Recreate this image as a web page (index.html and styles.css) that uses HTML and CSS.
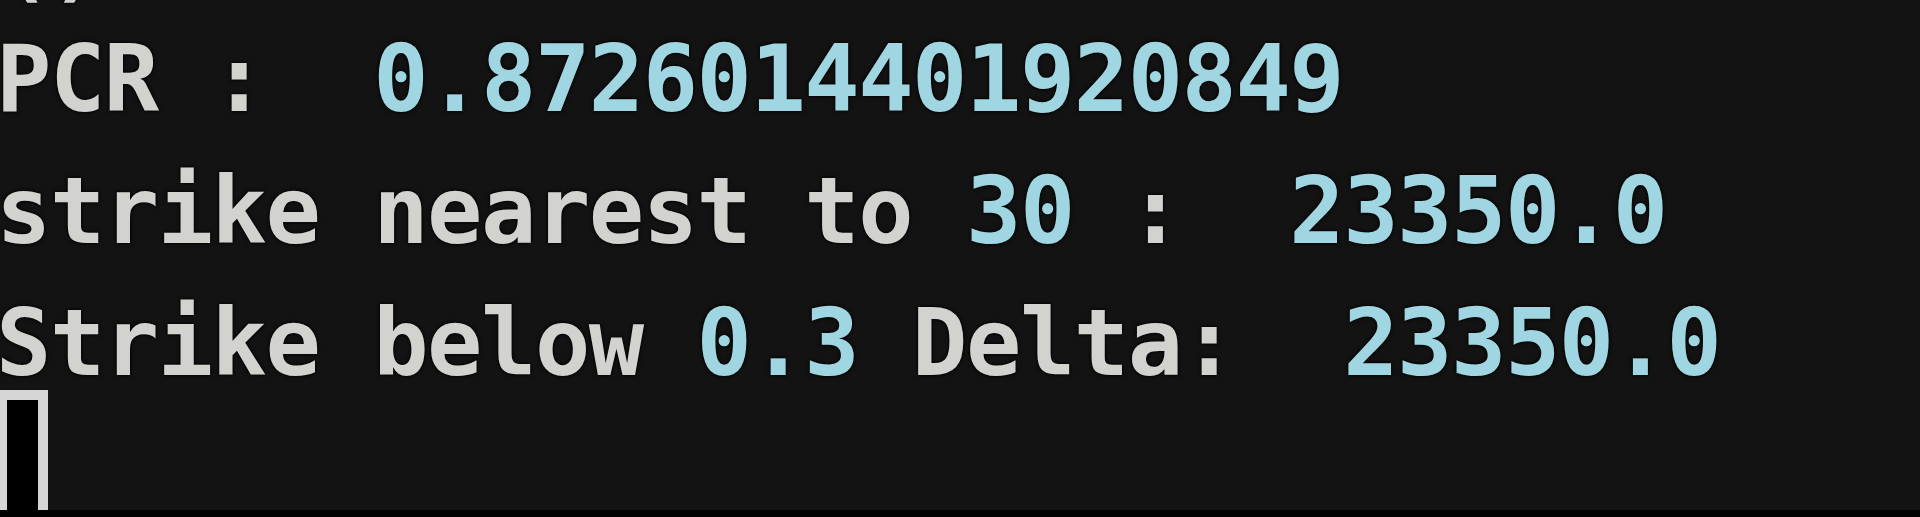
FILE: index.html
```html
<!DOCTYPE html>
<html>
<head>
<meta charset="utf-8">
<link rel="stylesheet" href="styles.css">
</head>
<body>
<div class="screen">
  <div class="term">
    <div class="line first">()</div>
    <div class="line">PCR :  <span class="num">0.8726014401920849</span></div>
    <div class="line">strike nearest to <span class="num">30</span> :  <span class="num">23350.0</span></div>
    <div class="line">Strike below <span class="num">0.3</span> Delta:  <span class="num">23350.0</span></div>
    <div class="cursor"></div>
  </div>
  <div class="edge"></div>
</div>
</body>
</html>
```
FILE: styles.css
```css
html, body {
  margin: 0;
  padding: 0;
  background: #131313;
}
.screen {
  width: 1920px;
  height: 517px;
  display: flex;
  flex-direction: column;
  overflow: hidden;
}
.term {
  flex: 1;
  overflow: hidden;
  margin-left: -4px;
  font-family: "DejaVu Sans Mono", "Liberation Mono", monospace;
  font-weight: bold;
  font-size: 92px;
  letter-spacing: -1.5px;
  color: #d2d2cf;
  text-shadow: 0 0 4px #000, 0 0 2px #000;
}
.line {
  height: 132px;
  line-height: 132px;
  white-space: pre;
}
.line.first {
  margin-top: -106px;
  height: 120px;
  line-height: 132px;
  overflow: hidden;
}
.num {
  color: #9fd6e2;
}
.cursor {
  margin-top: -20px;
  margin-left: 1px;
  width: 51px;
  height: 140px;
  box-sizing: border-box;
  border: 10px solid #d6d6d6;
  background: #000;
}
.edge {
  height: 7px;
  background: #000;
  flex: none;
}
```
